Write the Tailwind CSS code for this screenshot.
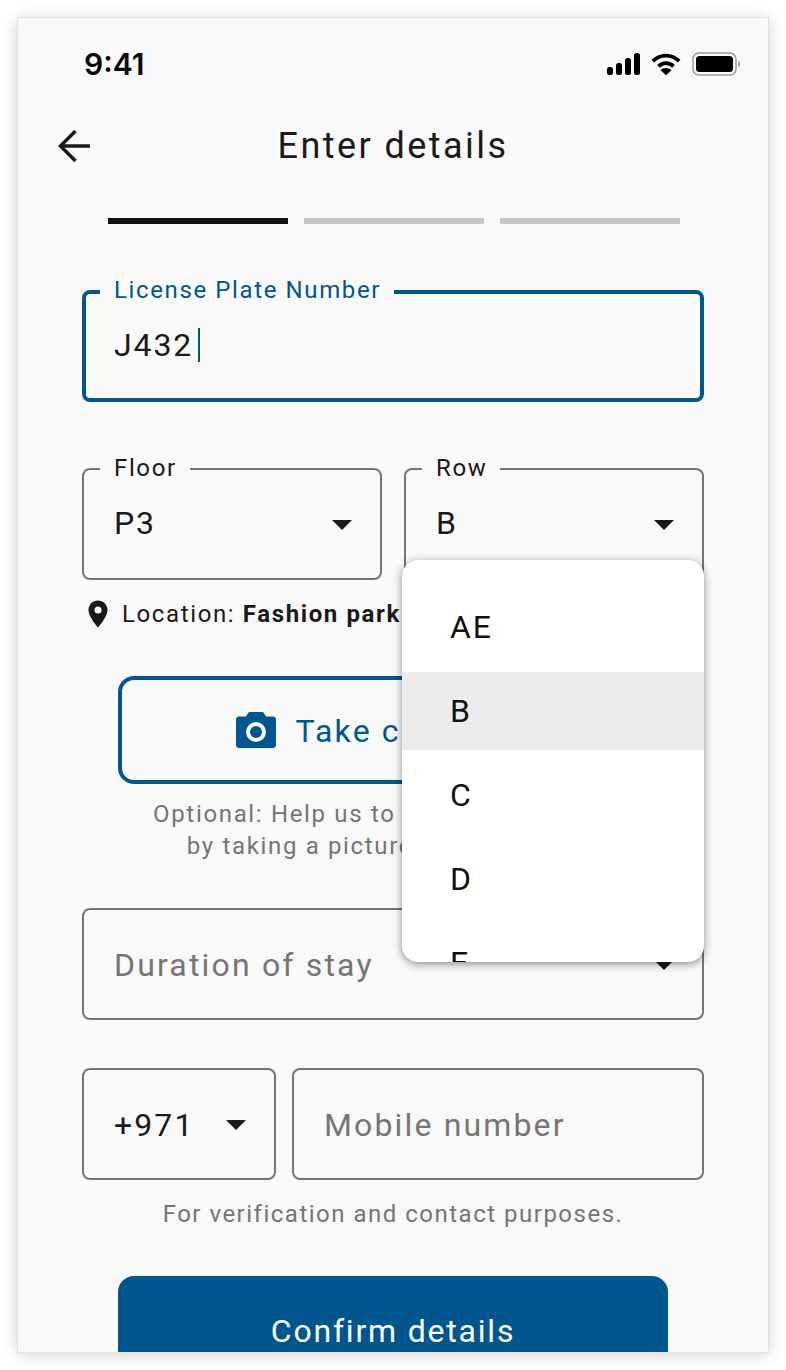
<!DOCTYPE html>
<html lang="en">
<head>
<meta charset="utf-8">
<title>Enter details</title>
<script src="https://cdn.jsdelivr.net/npm/@tailwindcss/browser@4"></script>
</head>
<body class="bg-white">
<div class="w-[786px] h-[1370px] pt-[18px] pl-[18px] overflow-hidden font-['Roboto',sans-serif]">
  <div class="relative w-[750px] h-[1334px] overflow-hidden bg-[#f9f9f9] shadow-[0_0_0_1px_#e2e2e2,0_2px_16px_rgba(0,0,0,0.2)]">
    <!-- status bar -->
    <div class="h-[92px] pl-[66px] pr-[27px] pt-[28px] flex justify-between items-start">
      <span class="font-['Inter',sans-serif] font-semibold text-[30px] leading-[36px] text-[#0a0a0a]">9:41</span>
      <div class="flex items-center gap-[10px] pt-[6px]">
        <svg width="34" height="22" viewBox="0 0 34 22" fill="#000"><rect x="0" y="14" width="6" height="8" rx="2.5"/><rect x="9" y="10" width="6" height="12" rx="2.5"/><rect x="18" y="5" width="6" height="17" rx="2.5"/><rect x="27" y="0" width="6" height="22" rx="2.5"/></svg>
        <svg width="30" height="24" viewBox="0 0 32 24" fill="none" stroke="#000" stroke-width="4"><path d="M2 9C10 1 22 1 30 9"/><path d="M8 14.5C12.500 10 19.500 10 24 14.500"/><path fill="#000" stroke="none" d="M16 24l-6-5.500c3.500-3 8.500-3 12 0z"/></svg>
        <svg width="49" height="24" viewBox="0 0 49 24" class="ml-[1px]"><rect x="1" y="1" width="43" height="22" rx="6" fill="none" stroke="#9a9a9a" stroke-width="1.500"/><rect x="4" y="4" width="37" height="16" rx="3.500" fill="#000"/><path d="M46 9v6c1.500-.5 2-1.700 2-3s-.5-2.500-2-3z" fill="#9a9a9a"/></svg>
      </div>
    </div>
    <!-- header -->
    <div class="relative h-[72px] flex items-center justify-center">
      <svg class="absolute left-[39px] top-[19px]" width="34" height="34" viewBox="0 0 34 34" fill="none" stroke="#1a1a1a" stroke-width="3.500"><path d="M33 17H5"/><path d="M18.500 2L3.500 17l15 15"/></svg>
      <h1 class="text-[36px] leading-[44px] tracking-[2.45px] text-[#1a1a1a] font-normal">Enter details</h1>
    </div>
    <!-- progress -->
    <div class="mt-[36px] flex gap-[16px] pl-[90px]">
      <div class="w-[180px] shrink-0 h-[6px] bg-[#111111]"></div>
      <div class="w-[180px] shrink-0 h-[6px] bg-[#c4c4c4]"></div>
      <div class="w-[180px] shrink-0 h-[6px] bg-[#c4c4c4]"></div>
    </div>
    <!-- form -->
    <div class="px-[64px] pt-[66px]">
      <div class="relative h-[112px] border-[4px] border-[#00568d] rounded-[8px] pl-[28px] pt-[33px]">
        <span class="absolute left-[14px] top-[-18px] pl-[14px] pr-[13px] bg-[#f9f9f9] text-[24px] leading-[28px] tracking-[1.62px] text-[#00568d]">License Plate Number</span>
        <div class="flex items-center h-[36px] text-[32px] tracking-[1.9px] text-[#1a1a1a]"><span>J432</span><span class="w-[2px] h-[34px] bg-[#00568d] ml-[5px]"></span></div>
      </div>
      <div class="mt-[66px] flex gap-[22px]">
        <div class="relative w-[300px] h-[112px] border-2 border-[#757575] rounded-[8px] flex items-center justify-between pl-[30px] pr-[28px]">
          <span class="absolute left-[16px] top-[-16px] pl-[14px] pr-[13px] bg-[#f9f9f9] text-[24px] leading-[28px] tracking-[1.62px] text-[#1a1a1a]">Floor</span>
          <span class="text-[32px] leading-[44px] mb-[2px] tracking-[1.9px] text-[#1a1a1a]">P3</span>
          <svg class="mt-[2px]" width="20" height="10" viewBox="0 0 20 10" fill="#1a1a1a"><path d="M0 0h20L10 10z"/></svg>
        </div>
        <div class="relative w-[300px] h-[112px] border-2 border-[#757575] rounded-[8px] flex items-center justify-between pl-[30px] pr-[28px]">
          <span class="absolute left-[16px] top-[-16px] pl-[14px] pr-[13px] bg-[#f9f9f9] text-[24px] leading-[28px] tracking-[1.62px] text-[#1a1a1a]">Row</span>
          <span class="text-[32px] leading-[44px] mb-[2px] tracking-[1.9px] text-[#1a1a1a]">B</span>
          <svg class="mt-[2px]" width="20" height="10" viewBox="0 0 20 10" fill="#1a1a1a"><path d="M0 0h20L10 10z"/></svg>
        </div>
      </div>
      <div class="mt-[20px] flex items-center h-[28px] pl-[6px] text-[24px] tracking-[1.62px] text-[#1a1a1a] whitespace-nowrap">
        <svg width="20" height="28" viewBox="0 0 20 28" fill="#1a1a1a" class="mr-[14px]"><path fill-rule="evenodd" d="M10 .5C4.700.5.500 4.700.500 10c0 7 9.500 17.500 9.500 17.500S19.500 17 19.500 10C19.500 4.700 15.300.5 10 .5zm0 13a3.500 3.500 0 1 1 0-7 3.500 3.500 0 0 1 0 7z"/></svg>
        <span>Location: <b class="font-bold">Fashion park</b></span>
      </div>
      <div class="mt-[48px] mx-[36px] h-[108px] border-[4px] border-[#00568d] rounded-[16px] flex items-center justify-center gap-[20px] text-[#00568d]">
        <svg width="40" height="36" viewBox="0 0 40 36" fill="#00568d"><path fill-rule="evenodd" d="M10 4.500l2-3.300C12.500.4 13.200 0 14 0h12c.8 0 1.500.4 2 1.200l2 3.300h7c1.700 0 3 1.300 3 3V33c0 1.700-1.300 3-3 3H3c-1.700 0-3-1.300-3-3V7.500c0-1.700 1.300-3 3-3zM20 10a10 10 0 1 0 0 20 10 10 0 0 0 0-20zm0 4a6 6 0 1 1 0 12 6 6 0 0 1 0-12z"/></svg>
        <span class="text-[32px] leading-[40px] tracking-[2.15px] mr-[14px] mt-[2px]">Take car photo</span>
      </div>
      <p class="mt-[14px] text-center text-[24px] leading-[32px] tracking-[1.66px] text-[#757575] whitespace-nowrap">Optional: Help us to locate your vehicle<br>by taking a picture of the location</p>
      <div class="mt-[46px] h-[112px] border-2 border-[#757575] rounded-[8px] flex items-center justify-between pl-[30px] pr-[28px]">
        <span class="text-[32px] tracking-[2.17px] text-[#757575] mt-[2px]">Duration of stay</span>
        <svg class="mt-[2px]" width="20" height="10" viewBox="0 0 20 10" fill="#1a1a1a"><path d="M0 0h20L10 10z"/></svg>
      </div>
      <div class="mt-[48px] flex gap-[16px]">
        <div class="w-[194px] h-[112px] border-2 border-[#757575] rounded-[8px] flex items-center justify-between pl-[30px] pr-[28px]">
          <span class="text-[32px] tracking-[2.1px] text-[#1a1a1a] mt-[2px]">+971</span>
          <svg class="mt-[2px]" width="20" height="10" viewBox="0 0 20 10" fill="#1a1a1a"><path d="M0 0h20L10 10z"/></svg>
        </div>
        <div class="flex-1 h-[112px] border-2 border-[#757575] rounded-[8px] flex items-center pl-[30px]">
          <span class="text-[32px] tracking-[2.15px] text-[#757575] mt-[2px]">Mobile number</span>
        </div>
      </div>
      <p class="mt-[20px] text-center text-[24px] leading-[28px] tracking-[1.5px] text-[#757575]">For verification and contact purposes.</p>
      <div class="mt-[48px] mx-[36px] h-[110px] bg-[#00568d] rounded-[16px] flex items-center justify-center">
        <span class="text-[32px] tracking-[1.8px] text-white">Confirm details</span>
      </div>
    </div>
    <!-- dropdown menu -->
    <div class="absolute left-[384px] top-[542px] w-[302px] h-[402px] overflow-hidden bg-white rounded-[16px] shadow-[0_2px_8px_rgba(0,0,0,0.45)] pt-[28px] flex flex-col gap-[6px] text-[32px] tracking-[1.9px] text-[#111111]">
      <div class="h-[78px] shrink-0 flex items-center pl-[48px]">AE</div>
      <div class="h-[78px] shrink-0 flex items-center pl-[48px] bg-[#ebebeb]">B</div>
      <div class="h-[78px] shrink-0 flex items-center pl-[48px]">C</div>
      <div class="h-[78px] shrink-0 flex items-center pl-[48px]">D</div>
      <div class="h-[78px] shrink-0 flex items-center pl-[48px]">E</div>
    </div>
  </div>
</div>
</body>
</html>
